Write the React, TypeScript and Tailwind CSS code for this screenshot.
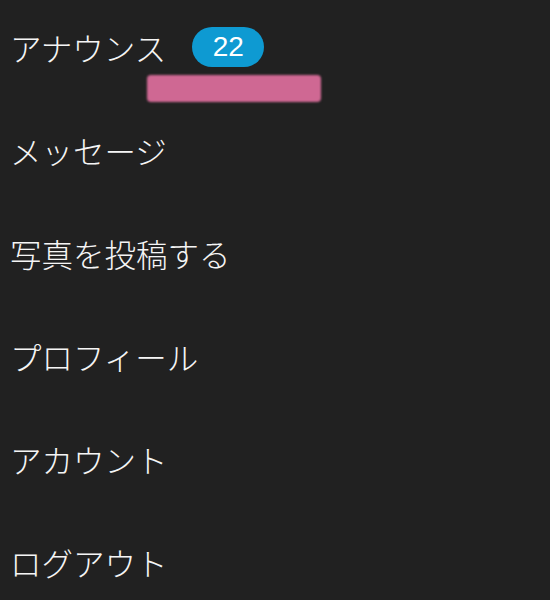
import React from 'react';

const items = ['メッセージ', '写真を投稿する', 'プロフィール', 'アカウント', 'ログアウト'];

const App: React.FC = () => {
  return (
    <div
      className="w-[550px] h-[600px] bg-[#212121] overflow-hidden text-[#f5f5f5]"
      style={{ fontFamily: '"Noto Sans CJK JP", "Noto Sans", sans-serif' }}
    >
      <nav className="flex flex-col gap-[69px] pt-[30px] pl-[10px]">
        {/* Announcements row with badge */}
        <div className="relative flex items-center h-[34px]">
          <span className="text-[31.5px] leading-[34px] font-light">アナウンス</span>
          <span
            className="ml-[26px] flex items-center justify-center w-[72px] h-[40px] rounded-full bg-[#0e9ad2] text-white text-[28px]"
            style={{ fontFamily: '"Liberation Sans", Arial, sans-serif' }}
          >
            22
          </span>
          <div className="absolute left-[137px] top-[45px] w-[174px] h-[27px] rounded-[4px] bg-[#cf6893] blur-[1px]" />
        </div>

        {items.map(label => (
          <div key={label} className="flex items-center h-[34px]">
            <span className="text-[31.5px] leading-[34px] font-light">{label}</span>
          </div>
        ))}
      </nav>
    </div>
  );
};

export default App;
